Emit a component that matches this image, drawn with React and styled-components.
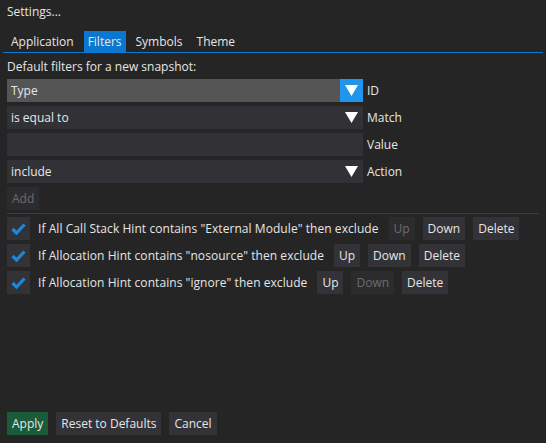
import React from 'react';
import styled, { createGlobalStyle } from 'styled-components';

const GlobalStyle = createGlobalStyle`
  html, body {
    margin: 0;
    padding: 0;
    background: #252525;
  }
  body {
    font-family: 'Open Sans', 'Noto Sans', sans-serif;
    font-size: 12px;
    color: #e6e6e6;
  }
`;

const Window = styled.div`
  height: 443px;
  display: flex;
  flex-direction: column;
  box-sizing: border-box;
  padding-bottom: 8px;
`;

const Title = styled.div`
  height: 24px;
  line-height: 24px;
  padding: 0 7px;
`;

const TabBar = styled.div`
  display: flex;
  gap: 6px;
  margin: 7px 3px 0;
  padding-left: 4px;
  border-bottom: 1.5px solid #0a78d0;
`;

const Tab = styled.div`
  height: 21px;
  line-height: 21px;
  padding: 0 4px;
  background: ${(p) => (p.$active ? '#0a78d0' : 'transparent')};
`;

const Body = styled.div`
  flex: 1;
  display: flex;
  flex-direction: column;
  padding: 5px 7px 0;
`;

const Caption = styled.div`
  line-height: 18px;
  margin-bottom: 3px;
`;

const Fields = styled.div`
  display: flex;
  flex-direction: column;
  gap: 4px;
`;

const FieldRow = styled.div`
  display: grid;
  grid-template-columns: 356px auto;
  column-gap: 4px;
  align-items: center;
  height: 23px;
`;

const Frame = styled.div`
  height: 23px;
  display: flex;
  align-items: center;
  background: ${(p) => (p.$hover ? '#555555' : '#323236')};
`;

const FrameText = styled.span`
  flex: 1;
  padding-left: 4px;
`;

const Arrow = styled.div`
  width: 23px;
  height: 23px;
  display: flex;
  align-items: center;
  justify-content: center;
  background: ${(p) => (p.$hover ? '#1f95ec' : 'transparent')};
`;

const Button = styled.button`
  font: inherit;
  height: 23px;
  padding: 0 5px;
  border: none;
  background: ${(p) =>
    p.$primary ? '#1a5b39' : p.$disabled ? '#2c2c2f' : '#333337'};
  color: ${(p) => (p.$disabled ? '#6c6c6c' : '#e6e6e6')};
  white-space: nowrap;
  align-self: flex-start;
`;

const Separator = styled.div`
  height: 1px;
  background: #3c3c3c;
  margin: 3px 0 3px;
`;

const Rules = styled.div`
  display: flex;
  flex-direction: column;
  gap: 4px;
`;

const RuleRow = styled.div`
  display: flex;
  align-items: center;
  height: 23px;
  gap: 8px;
`;

const Check = styled.div`
  width: 23px;
  height: 23px;
  background: #333337;
  display: flex;
  align-items: center;
  justify-content: center;
  flex-shrink: 0;
`;

const RuleText = styled.span`
  white-space: nowrap;
  margin-right: 2px;
  letter-spacing: 0.06px;
`;

const Footer = styled.div`
  margin-top: auto;
  display: flex;
  gap: 8px;
`;

function DownArrow() {
  return (
    <svg width="13" height="11" viewBox="0 0 13 11">
      <polygon points="0,0 13,0 6.5,11" fill="#ffffff" />
    </svg>
  );
}

function CheckMark() {
  return (
    <svg width="15" height="12" viewBox="0 0 15 12">
      <polyline
        points="1.5,6 5.5,10 13.5,1.5"
        fill="none"
        stroke="#1c87dc"
        strokeWidth="3.2"
      />
    </svg>
  );
}

const rules = [
  { text: 'If All Call Stack Hint contains "External Module" then exclude', up: false, down: true },
  { text: 'If Allocation Hint contains "nosource" then exclude', up: true, down: true },
  { text: 'If Allocation Hint contains "ignore" then exclude', up: true, down: false },
];

export default function App() {
  return (
    <Window>
      <GlobalStyle />
      <Title>Settings...</Title>
      <TabBar>
        <Tab>Application</Tab>
        <Tab $active>Filters</Tab>
        <Tab>Symbols</Tab>
        <Tab>Theme</Tab>
      </TabBar>
      <Body>
        <Caption>Default filters for a new snapshot:</Caption>
        <Fields>
          <FieldRow>
            <Frame $hover>
              <FrameText>Type</FrameText>
              <Arrow $hover>
                <DownArrow />
              </Arrow>
            </Frame>
            <span>ID</span>
          </FieldRow>
          <FieldRow>
            <Frame>
              <FrameText>is equal to</FrameText>
              <Arrow>
                <DownArrow />
              </Arrow>
            </Frame>
            <span>Match</span>
          </FieldRow>
          <FieldRow>
            <Frame />
            <span>Value</span>
          </FieldRow>
          <FieldRow>
            <Frame>
              <FrameText>include</FrameText>
              <Arrow>
                <DownArrow />
              </Arrow>
            </Frame>
            <span>Action</span>
          </FieldRow>
          <Button $disabled>Add</Button>
        </Fields>
        <Separator />
        <Rules>
          {rules.map((r) => (
            <RuleRow key={r.text}>
              <Check>
                <CheckMark />
              </Check>
              <RuleText>{r.text}</RuleText>
              <Button $disabled={!r.up}>Up</Button>
              <Button $disabled={!r.down}>Down</Button>
              <Button>Delete</Button>
            </RuleRow>
          ))}
        </Rules>
        <Footer>
          <Button $primary>Apply</Button>
          <Button>Reset to Defaults</Button>
          <Button>Cancel</Button>
        </Footer>
      </Body>
    </Window>
  );
}
